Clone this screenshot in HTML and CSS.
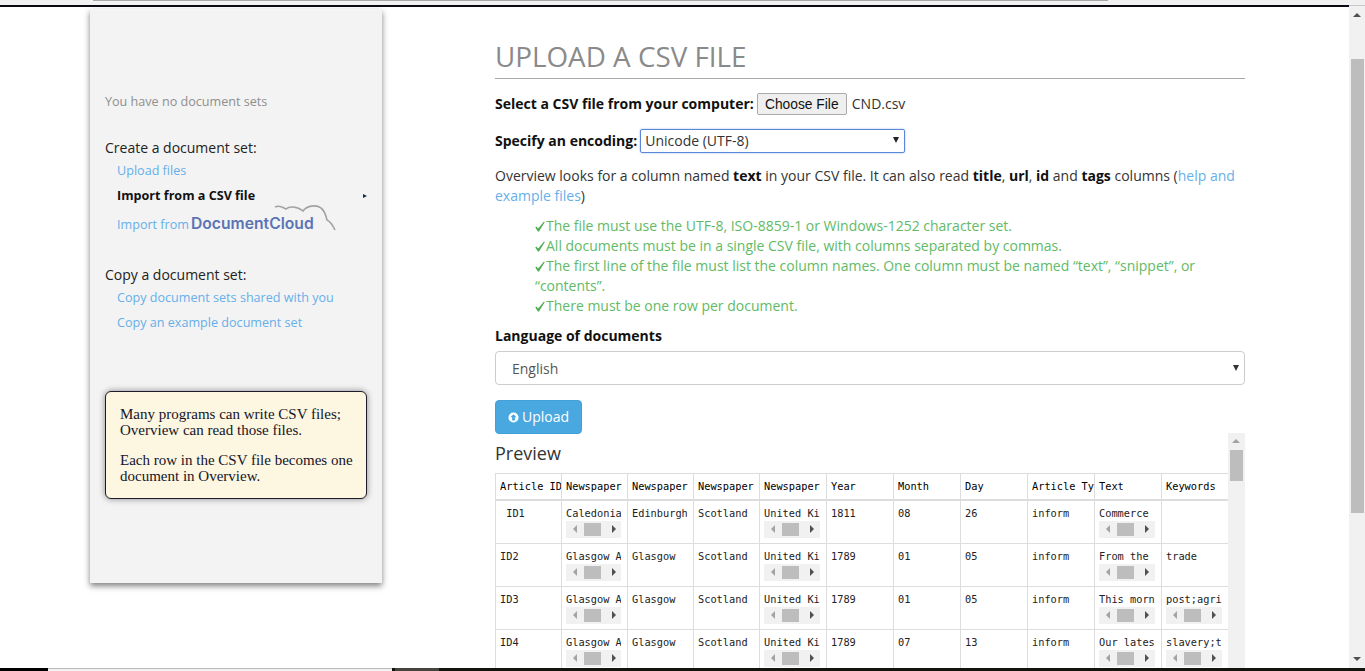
FILE: index.html
```html
<!DOCTYPE html>
<html lang="en">
<head>
    <meta charset="UTF-8">
    <meta name="viewport" content="width=device-width, initial-scale=1.0">
    <title>Upload a CSV file</title>
    <link rel="stylesheet" href="styles.css">
</head>
<body>

<div class="top-strip"><div class="top-strip-line"></div></div>

<div class="page">
    <div class="page-content">
        <aside class="sidebar">
            <p class="no-sets">You have no document sets</p>
            <h4 class="side-title">Create a document set:</h4>
            <ul class="side-list">
                <li><a href="#">Upload files</a></li>
                <li class="active">Import from a CSV file<span class="active-mark"></span></li>
                <li class="dc-item">
                    <a href="#">Import from</a><span class="dc-logo">DocumentCloud</span>
                    <svg class="dc-cloud" width="64" height="28" viewBox="0 0 64 28" fill="none" stroke="#a3a3a3" stroke-width="1.6">
                        <path d="M1 3 C5 1 9 3 12 5 C15 2 23 2 29 7 C32 2 42 0 47 4 C51 7 52 12 53 16 C56 17 58 20 61 26"/>
                    </svg>
                </li>
            </ul>
            <h4 class="side-title copy-title">Copy a document set:</h4>
            <ul class="side-list">
                <li><a href="#">Copy document sets shared with you</a></li>
                <li><a href="#">Copy an example document set</a></li>
            </ul>
            <div class="callout">
                <p>Many programs can write CSV files; Overview can read those files.</p>
                <p>Each row in the CSV file becomes one document in Overview.</p>
            </div>
        </aside>

        <main class="main">
            <h2 class="page-title">UPLOAD A CSV FILE</h2>

            <div class="field-row file-row">
                <b>Select a CSV file from your computer:</b>
                <button class="file-btn">Choose File</button>
                <span>CND.csv</span>
            </div>

            <div class="field-row enc-row">
                <b>Specify an encoding:</b>
                <div class="enc-select">Unicode (UTF-8)<span class="enc-arrow"></span></div>
            </div>

            <p class="intro">Overview looks for a column named <b>text</b> in your CSV file. It can also read <b>title</b>, <b>url</b>, <b>id</b> and <b>tags</b> columns (<a href="#">help and example files</a>)</p>

            <ul class="checks">
                <li><svg class="check" width="10" height="11" viewBox="0 0 10 11"><path d="M0.3 6.5 L1.2 5.6 L3.2 7.6 L9 0.6 L9.8 0.9 L4 10.6 L2.9 10.6 Z"/></svg>The file must use the UTF-8, ISO-8859-1 or Windows-1252 character set.</li>
                <li><svg class="check" width="10" height="11" viewBox="0 0 10 11"><path d="M0.3 6.5 L1.2 5.6 L3.2 7.6 L9 0.6 L9.8 0.9 L4 10.6 L2.9 10.6 Z"/></svg>All documents must be in a single CSV file, with columns separated by commas.</li>
                <li><svg class="check" width="10" height="11" viewBox="0 0 10 11"><path d="M0.3 6.5 L1.2 5.6 L3.2 7.6 L9 0.6 L9.8 0.9 L4 10.6 L2.9 10.6 Z"/></svg>The first line of the file must list the column names. One column must be named “text”, “snippet”, or “contents”.</li>
                <li><svg class="check" width="10" height="11" viewBox="0 0 10 11"><path d="M0.3 6.5 L1.2 5.6 L3.2 7.6 L9 0.6 L9.8 0.9 L4 10.6 L2.9 10.6 Z"/></svg>There must be one row per document.</li>
            </ul>

            <label class="lang-label">Language of documents</label>
            <div class="lang-select">English<span class="lang-arrow"></span></div>

            <button class="upload-btn">
                <svg width="11" height="11" viewBox="0 0 12 12"><circle cx="6" cy="6" r="5.5" fill="#fff"/><path d="M6 2.4 L9.4 5.8 H7.5 V9.2 H4.5 V5.8 H2.6 Z" fill="#4aa8e0"/></svg>
                <span class="upload-label">Upload</span>
            </button>

            <div class="preview">
                <div class="preview-body">
                    <h3 class="preview-title">Preview</h3>
                    <table class="csv-table">
                        <thead id="csv-head"></thead>
                        <tbody id="csv-rows"></tbody>
                    </table>
                </div>
                <div class="vbar preview-bar">
                    <span class="vbar-up"></span>
                    <span class="vbar-thumb"></span>
                </div>
            </div>
        </main>
    </div>

    <div class="vbar page-bar">
        <span class="vbar-up"></span>
        <span class="vbar-thumb"></span>
        <span class="vbar-down"></span>
    </div>
</div>

<div class="bottom-strip">
    <span class="strip-black"></span>
    <span class="strip-light"></span>
    <span class="strip-grey"></span>
    <span class="strip-dark"></span>
</div>

<script>
    const HEADERS = ['Article ID', 'Newspaper', 'Newspaper', 'Newspaper', 'Newspaper', 'Year', 'Month', 'Day', 'Article Type', 'Text', 'Keywords'];

    // a trailing * means the cell shows its own little scrollbar
    const ROWS = [
        [' ID1', 'Caledonian Mercury*', 'Edinburgh', 'Scotland', 'United Kingdom*', '1811', '08', '26', 'inform', 'Commerce of*', ''],
        ['ID2', 'Glasgow Advertiser*', 'Glasgow', 'Scotland', 'United Kingdom*', '1789', '01', '05', 'inform', 'From the Lo*', 'trade'],
        ['ID3', 'Glasgow Advertiser*', 'Glasgow', 'Scotland', 'United Kingdom*', '1789', '01', '05', 'inform', 'This morning*', 'post;agriculture*'],
        ['ID4', 'Glasgow Advertiser*', 'Glasgow', 'Scotland', 'United Kingdom*', '1789', '07', '13', 'inform', 'Our latest a*', 'slavery;trade*']
    ];

    function cellHtml(value) {
        if (!value.endsWith('*')) {
            return `<td><div class="cell-text">${value}</div></td>`;
        }
        return `<td><div class="cell-text">${value.slice(0, -1)}</div>
            <div class="hbar"><span class="hbar-left"></span><span class="hbar-thumb"></span><span class="hbar-right"></span></div></td>`;
    }

    document.getElementById('csv-head').innerHTML =
        '<tr>' + HEADERS.map(h => `<th><div class="head-text">${h}</div></th>`).join('') + '</tr>';
    document.getElementById('csv-rows').innerHTML =
        ROWS.map(row => '<tr>' + row.map(cellHtml).join('') + '</tr>').join('');
</script>

</body>
</html>
```

FILE: styles.css
```css
html, body {
    height: 100%;
}
body {
    margin: 0;
    overflow: hidden;
    background: #fff;
    color: #222;
    font-family: "Open Sans", sans-serif;
    font-size: 14px;
    line-height: 20px;
    display: flex;
    flex-direction: column;
}
a {
    color: #66afe9;
    text-decoration: none;
}

/* strip of the window above the page */
.top-strip {
    height: 5px;
    flex: none;
    background: #f1f1f1;
    padding-left: 93px;
    padding-right: 257px;
}
.top-strip-line {
    height: 1px;
    background: #a8a8a8;
}
.page {
    flex: 1;
    min-height: 0;
    display: flex;
}
.page-content {
    flex: 1;
    min-width: 0;
    border-top: 2px solid #0a0a14;
    display: flex;
    overflow: hidden;
}

/* left panel */
.sidebar {
    flex: none;
    width: 292px;
    height: 574px;
    margin-left: 90px;
    margin-top: 2px;
    padding: 83px 15px 0;
    box-sizing: border-box;
    background: #f3f3f3;
    box-shadow: 0 3px 6px rgba(0, 0, 0, 0.5);
}
.no-sets {
    margin: 0;
    color: #8f8f8f;
    font-size: 12.6px;
}
.side-title {
    margin: 26px 0 0;
    font-size: 14px;
    font-weight: 400;
    line-height: 20px;
}
.copy-title {
    margin-top: 26px;
}
.side-list {
    list-style: none;
    margin: 3px 0 0;
    padding: 0 0 0 12px;
    font-size: 12.6px;
}
.side-list li {
    height: 25px;
    line-height: 20px;
    position: relative;
}
.side-list .active {
    font-weight: 700;
    color: #111;
}
.active-mark {
    position: absolute;
    left: 246px;
    top: 8px;
    width: 0;
    height: 0;
    border-left: 4px solid #1a2a4a;
    border-top: 2px solid transparent;
    border-bottom: 2px solid transparent;
}
.dc-item {
    padding-top: 3px;
}
.dc-logo {
    margin-left: 2px;
    color: #5b74b5;
    font-family: "Inter", sans-serif;
    font-size: 15.7px;
    font-weight: 600;
}
.dc-cloud {
    position: absolute;
    left: 157px;
    top: -7px;
}
.callout {
    margin-top: 53px;
    width: 262px;
    height: 108px;
    box-sizing: border-box;
    padding: 14px 10px 0 14px;
    background: #fdf6e0;
    border: 1px solid #1c1c2c;
    border-radius: 6px;
    box-shadow: 0 0 6px rgba(0, 0, 0, 0.45);
    font-family: "Liberation Serif", serif;
    font-size: 15px;
    line-height: 16px;
    color: #14142a;
}
.callout p {
    margin: 0 0 14px;
}

/* main column */
.main {
    flex: none;
    width: 750px;
    margin-left: 113px;
}
.page-title {
    margin: 32px 0 0;
    padding-bottom: 5px;
    font-size: 27.8px;
    font-weight: 400;
    line-height: 34px;
    color: #8a8a8a;
    border-bottom: 1px solid #a8a8a8;
}
.field-row {
    display: flex;
    align-items: center;
    color: #333;
}
.field-row b {
    color: #111;
}
.file-row {
    margin-top: 14px;
    height: 22px;
}
.file-btn {
    margin-left: 3px;
    margin-right: 5px;
    width: 90px;
    height: 22px;
    padding: 0;
    background: #efefef;
    border: 1px solid #aaa;
    border-radius: 2px;
    color: #111;
    font-family: "Liberation Sans", sans-serif;
    font-size: 13.8px;
}
.enc-row {
    margin-top: 14px;
    height: 24px;
}
.enc-select {
    flex: none;
    position: relative;
    margin-left: 3px;
    width: 265px;
    height: 24px;
    box-sizing: border-box;
    padding-left: 4px;
    border: 1px solid #5b87d8;
    border-radius: 2px;
    box-shadow: 0 0 2px #8fb4ee;
    line-height: 22px;
}
.enc-arrow {
    position: absolute;
    right: 5px;
    top: 7px;
    border-top: 6px solid #222;
    border-left: 3px solid transparent;
    border-right: 3px solid transparent;
}
.intro {
    margin: 13px 0 0;
    color: #333;
}
.intro b {
    color: #111;
}
.checks {
    list-style: none;
    margin: 10px 0 0;
    padding: 0 0 0 40px;
    color: #62ba66;
}
.check {
    margin-right: 1px;
    vertical-align: -1px;
    fill: #4cae50;
}
.lang-label {
    display: block;
    margin-top: 10px;
    font-weight: 700;
    color: #111;
}
.lang-select {
    position: relative;
    margin-top: 5px;
    height: 34px;
    box-sizing: border-box;
    padding-left: 16px;
    border: 1px solid #ccc;
    border-radius: 4px;
    line-height: 34px;
    color: #555;
}
.lang-arrow {
    position: absolute;
    right: 5px;
    top: 13px;
    border-top: 6px solid #333;
    border-left: 3px solid transparent;
    border-right: 3px solid transparent;
}
.upload-btn {
    display: flex;
    align-items: center;
    gap: 3px;
    margin-top: 15px;
    width: 87px;
    height: 34px;
    padding: 0 0 0 12px;
    background: #4aa8e0;
    border: 1px solid #44a0d8;
    border-radius: 4px;
    color: #fff;
    font-family: "Open Sans", sans-serif;
    font-size: 14px;
}
.upload-label {
    margin-bottom: 2px;
}

/* preview box */
.preview {
    display: flex;
    margin-top: -1px;
    height: 240px;
    overflow: hidden;
}
.preview-body {
    flex: 1;
    min-width: 0;
}
.preview-title {
    margin: 8px 0 8px;
    font-size: 18px;
    font-weight: 400;
    line-height: 24px;
    color: #333;
}
.csv-table {
    table-layout: fixed;
    width: 733px;
    border-collapse: collapse;
    font-family: "DejaVu Sans Mono", monospace;
    font-size: 10.3px;
    line-height: 14px;
    color: #222;
}
.csv-table th,
.csv-table td {
    border: 1px solid #ddd;
    text-align: left;
    vertical-align: top;
    font-weight: 400;
}
.csv-table td {
    padding: 5px 6px 4px 4px;
    height: 33px;
}
.csv-table th {
    box-sizing: border-box;
    width: 67px;
    height: 26px;
    padding: 5px 0 4px 4px;
    overflow: hidden;
    border-bottom-width: 2px;
    color: #000;
}
.csv-table th:nth-child(-n+4) {
    width: 66px;
}
.head-text {
    white-space: pre;
}
.cell-text {
    white-space: pre;
    overflow: hidden;
}
.hbar {
    display: flex;
    align-items: center;
    height: 17px;
    margin-top: 1px;
    background: #f1f1f1;
    padding-left: 7px;
}
.hbar-left {
    border-right: 4px solid #a3a3a3;
    border-top: 4px solid transparent;
    border-bottom: 4px solid transparent;
}
.hbar-thumb {
    width: 17px;
    height: 13px;
    margin-left: 7px;
    background: #bdbdbd;
}
.hbar-right {
    margin-left: 11px;
    border-left: 4px solid #505050;
    border-top: 4px solid transparent;
    border-bottom: 4px solid transparent;
}

/* vertical scrollbars */
.vbar {
    flex: none;
    position: relative;
    width: 17px;
    background: #f1f1f1;
}
.preview-bar {
    height: 100%;
}
.vbar-up,
.vbar-down {
    position: absolute;
    left: 4px;
    border-left: 4px solid transparent;
    border-right: 4px solid transparent;
}
.vbar-up {
    top: 6px;
    border-bottom: 4px solid #505050;
}
.preview-bar .vbar-up {
    border-bottom-color: #a3a3a3;
}
.vbar-down {
    bottom: 10px;
    border-top: 4px solid #505050;
}
.vbar-thumb {
    position: absolute;
    left: 2px;
    width: 13px;
    background: #bdbdbd;
}
.preview-bar .vbar-thumb {
    top: 17px;
    height: 31px;
}
.page-bar {
    width: 16px;
    border-top: 1px solid #c8c8c8;
    box-sizing: border-box;
}
.page-bar .vbar-up {
    top: 7px;
}
.page-bar .vbar-thumb {
    top: 53px;
    height: 454px;
}

/* strip of the window under the page */
.bottom-strip {
    position: fixed;
    left: 0;
    right: 0;
    bottom: 0;
    height: 3px;
    display: flex;
    background: #14140e;
}
.strip-black {
    width: 48px;
    background: #000;
}
.strip-light {
    width: 344px;
    box-sizing: border-box;
    background: #f1f1f1;
    border-top: 1px solid #bbb;
}
.strip-grey {
    width: 44px;
    margin-left: 3px;
    background: #45453d;
}
.strip-dark {
    flex: 1;
}
```
